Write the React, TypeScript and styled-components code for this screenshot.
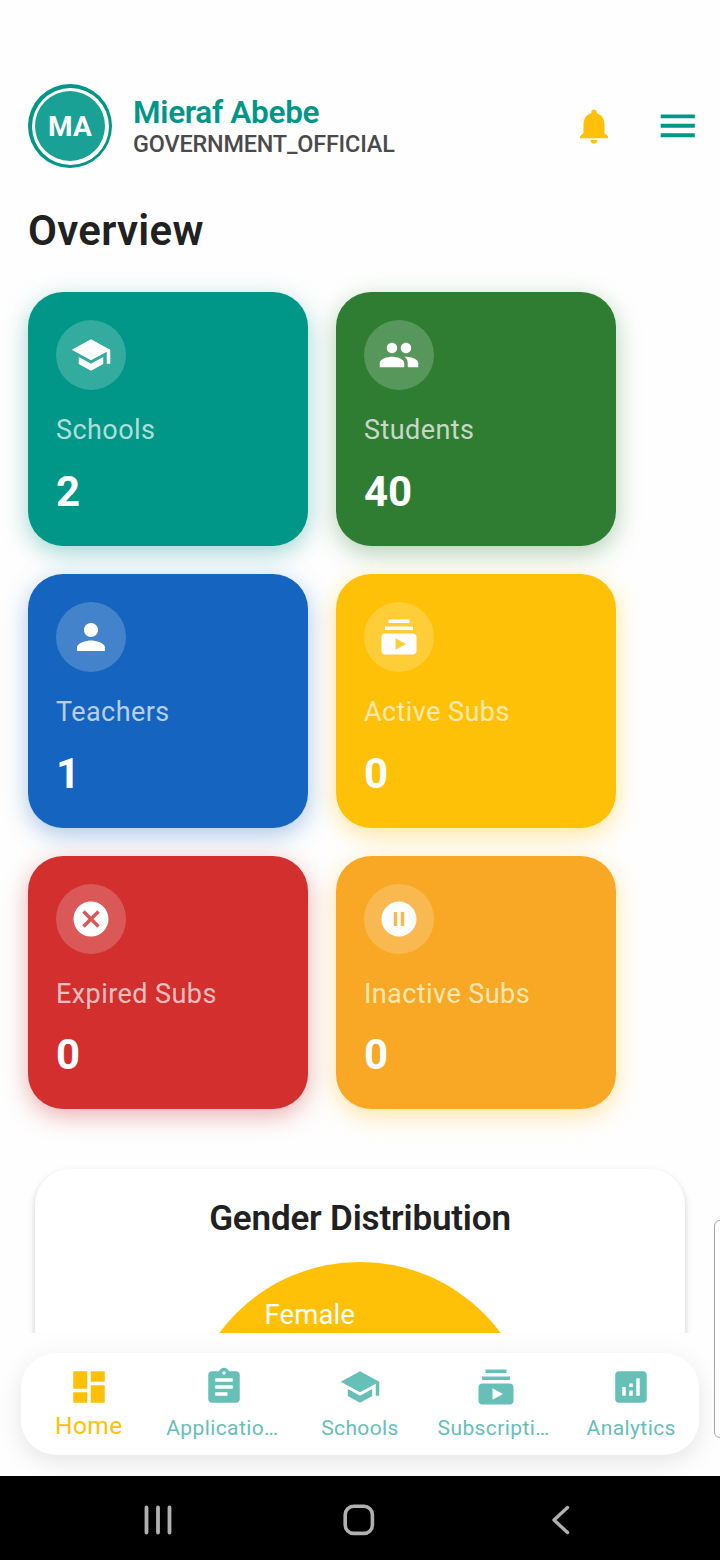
import React from 'react';
import styled, { createGlobalStyle } from 'styled-components';
import type { IconType } from 'react-icons';
import {
  MdAnalytics,
  MdAssignment,
  MdCancel,
  MdDashboard,
  MdMenu,
  MdNotifications,
  MdPauseCircleFilled,
  MdPeople,
  MdPerson,
  MdSchool,
  MdSubscriptions,
} from 'react-icons/md';

const GlobalStyle = createGlobalStyle`
  * { box-sizing: border-box; }
  body { margin: 0; background: #fefefe; font-family: Roboto, "Liberation Sans", sans-serif; }
  svg { display: block; flex: none; }
`;

const Screen = styled.div`
  position: relative;
  width: 720px;
  height: 1560px;
  display: flex;
  flex-direction: column;
  overflow: hidden;
  background: #fefefe;
`;

const Content = styled.main`
  height: 1333px;
  flex: none;
  padding-top: 84px;
  overflow: hidden;
`;

const Header = styled.header`
  display: flex;
  align-items: center;
  height: 84px;
  padding: 0 19.5px 0 28px;
`;

const Avatar = styled.div`
  width: 84px;
  height: 84px;
  padding: 3.5px;
  border-radius: 50%;
  background: #009688;
`;

const AvatarGap = styled.div`
  height: 100%;
  padding: 3.5px;
  border-radius: 50%;
  background: #fff;
`;

const Initials = styled.div`
  height: 100%;
  display: flex;
  align-items: center;
  justify-content: center;
  border-radius: 50%;
  background: #1aa195;
  color: #fff;
  font-size: 28px;
  font-weight: 700;
  letter-spacing: 0.2px;
`;

const Identity = styled.div`
  flex: 1;
  margin-left: 21px;
`;

const UserName = styled.div`
  color: #009688;
  font-size: 31.5px;
  line-height: 35px;
  font-weight: 600;
  letter-spacing: -0.3px;
`;

const Role = styled.div`
  color: #4a4a4a;
  font-size: 23.4px;
  line-height: 28px;
  font-weight: 500;
  letter-spacing: -0.17px;
`;

const Actions = styled.div`
  display: flex;
  align-items: center;
  gap: 40px;
`;

const Title = styled.h1`
  margin: 38px 28px 0;
  color: #212121;
  font-size: 42px;
  line-height: 50px;
  font-weight: 600;
  letter-spacing: 0.3px;
`;

const Cards = styled.section`
  display: grid;
  grid-template-columns: 280px 280px;
  grid-auto-rows: 253.7px;
  gap: 28px;
  padding: 36.3px 28px 0;
`;

const Card = styled.article<{ $color: string; $shadow: string }>`
  padding: 28px;
  border-radius: 35px;
  background: ${(p) => p.$color};
  box-shadow: 0 7px 25px ${(p) => p.$shadow};
`;

const CardIcon = styled.div`
  width: 70px;
  height: 70px;
  display: flex;
  align-items: center;
  justify-content: center;
  border-radius: 50%;
  background: rgba(255, 255, 255, 0.2);
  color: #fff;
`;

const CardLabel = styled.div<{ $color?: string }>`
  margin-top: 24px;
  color: ${(p) => p.$color ?? 'rgba(255, 255, 255, 0.7)'};
  font-size: 27px;
  line-height: 32px;
  font-weight: 450;
  letter-spacing: 0.43px;
`;

const CardValue = styled.div`
  margin-top: 20.7px;
  color: #fff;
  font-size: 42px;
  line-height: 50px;
  font-weight: 700;
`;

const ChartCard = styled.section`
  height: 480px;
  margin: 60px 35px 0;
  padding-top: 29px;
  display: flex;
  flex-direction: column;
  align-items: center;
  border-radius: 35px;
  background: #fff;
  box-shadow: 0 3.5px 6px rgba(60, 80, 75, 0.28);
`;

const ChartTitle = styled.h2`
  margin: 0 0 22px;
  color: #212121;
  font-size: 35px;
  line-height: 42px;
  font-weight: 600;
  letter-spacing: -0.17px;
`;

const SideHandle = styled.div`
  position: absolute;
  left: 714px;
  top: 1220px;
  width: 16px;
  height: 218px;
  border: 1px solid #a0aaa4;
  border-radius: 6px;
  background: #fff;
`;

const TabBar = styled.nav`
  display: grid;
  grid-template-columns: repeat(5, 1fr);
  flex: none;
  height: 102px;
  margin: 20px 21px 21px;
  border-radius: 35px;
  background: #fff;
  box-shadow: 0 7px 25px rgba(0, 0, 0, 0.1);
`;

const Tab = styled.div<{ $active?: boolean }>`
  display: flex;
  flex-direction: column;
  align-items: center;
  padding-top: 13px;
  color: ${(p) => (p.$active ? '#ffc107' : '#66c0b8')};
`;

const TabLabel = styled.span<{ $active?: boolean; $clipped?: boolean }>`
  margin-top: ${(p) => (p.$active ? 3 : 5)}px;
  padding-right: ${(p) => (p.$clipped ? 4 : 0)}px;
  font-size: ${(p) => (p.$active ? 24.5 : 21)}px;
  line-height: 30px;
  letter-spacing: 0.4px;
  white-space: nowrap;
`;

const SystemBar = styled.footer`
  display: flex;
  flex: none;
  justify-content: space-between;
  align-items: center;
  height: 84px;
  padding: 4px 140px 0 138px;
  background: #000;
`;

interface Stat {
  label: string;
  value: number;
  icon: IconType;
  color: string;
  shadow: string;
  labelColor?: string;
}

const stats: Stat[] = [
  { label: 'Schools', value: 2, icon: MdSchool, color: '#009688', shadow: 'rgba(0,150,136,.38)' },
  { label: 'Students', value: 40, icon: MdPeople, color: '#2e7d32', shadow: 'rgba(46,125,50,.36)', labelColor: '#c8d8c8' },
  { label: 'Teachers', value: 1, icon: MdPerson, color: '#1565c0', shadow: 'rgba(21,101,192,.36)' },
  { label: 'Active Subs', value: 0, icon: MdSubscriptions, color: '#ffc107', shadow: 'rgba(255,193,7,.4)', labelColor: '#ffe8b0' },
  { label: 'Expired Subs', value: 0, icon: MdCancel, color: '#d32f2f', shadow: 'rgba(211,47,47,.38)' },
  { label: 'Inactive Subs', value: 0, icon: MdPauseCircleFilled, color: '#f9a825', shadow: 'rgba(255,193,37,.4)', labelColor: '#ffe8b0' },
];

const tabs: { label: string; icon: IconType }[] = [
  { label: 'Home', icon: MdDashboard },
  { label: 'Applicatio…', icon: MdAssignment },
  { label: 'Schools', icon: MdSchool },
  { label: 'Subscripti…', icon: MdSubscriptions },
  { label: 'Analytics', icon: MdAnalytics },
];

const StatCard = ({ stat }: { stat: Stat }) => (
  <Card $color={stat.color} $shadow={stat.shadow}>
    <CardIcon>
      <stat.icon size={42} />
    </CardIcon>
    <CardLabel $color={stat.labelColor}>{stat.label}</CardLabel>
    <CardValue>{stat.value}</CardValue>
  </Card>
);

const GenderPie = () => (
  <svg width="350" height="350" viewBox="0 0 350 350">
    <circle cx="175" cy="175" r="175" fill="#ffc107" />
    <text x="79.5" y="61.5" fill="#fff" fontSize="27.5" letterSpacing="0.1">
      Female
    </text>
  </svg>
);

export default function App() {
  return (
    <>
      <GlobalStyle />
      <Screen>
        <Content>
          <Header>
            <Avatar>
              <AvatarGap>
                <Initials>MA</Initials>
              </AvatarGap>
            </Avatar>
            <Identity>
              <UserName>Mieraf Abebe</UserName>
              <Role>GOVERNMENT_OFFICIAL</Role>
            </Identity>
            <Actions>
              <MdNotifications size={42} color="#ffc107" />
              <MdMenu size={45.5} color="#009688" />
            </Actions>
          </Header>
          <Title>Overview</Title>
          <Cards>
            {stats.map((stat) => (
              <StatCard key={stat.label} stat={stat} />
            ))}
          </Cards>
          <ChartCard>
            <ChartTitle>Gender Distribution</ChartTitle>
            <GenderPie />
          </ChartCard>
        </Content>
        <TabBar>
          {tabs.map((tab, i) => (
            <Tab key={tab.label} $active={i === 0}>
              <tab.icon size={42} />
              <TabLabel $active={i === 0} $clipped={tab.label.endsWith('…')}>
                {tab.label}
              </TabLabel>
            </Tab>
          ))}
        </TabBar>
        <SystemBar>
          <svg width="40" height="40" viewBox="0 0 40 40" stroke="#b0b0b0" strokeWidth="3.8" strokeLinecap="round">
            <path d="M8.5 7.5v25M20 7.5v25M31.5 7.5v25" />
          </svg>
          <svg width="40" height="40" viewBox="0 0 40 40" fill="none" stroke="#b0b0b0" strokeWidth="3.6">
            <rect x="6.2" y="6.2" width="27.2" height="27.2" rx="8.5" />
          </svg>
          <svg width="40" height="40" viewBox="0 0 40 40" fill="none" stroke="#b0b0b0" strokeWidth="3.4" strokeLinecap="round" strokeLinejoin="round">
            <path d="M27.5 7.5L14 20l13.5 12.5" />
          </svg>
        </SystemBar>
        <SideHandle />
      </Screen>
    </>
  );
}
